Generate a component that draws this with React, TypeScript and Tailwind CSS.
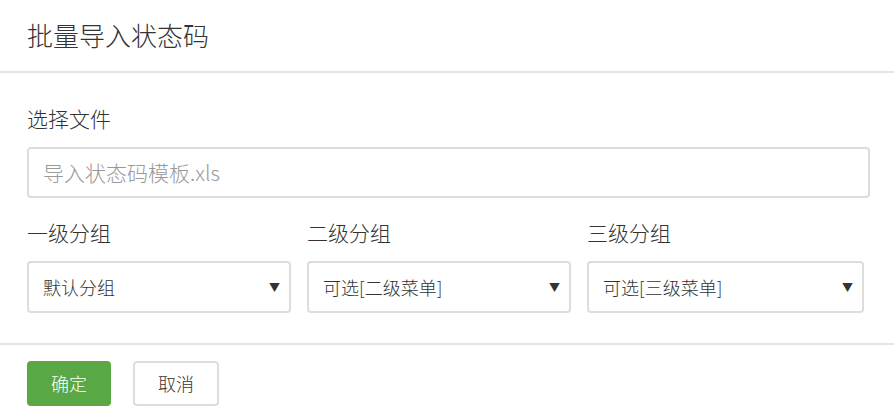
const groups = [
  { label: '一级分组', value: '默认分组', width: 'w-[264px]' },
  { label: '二级分组', value: '可选[二级菜单]', width: 'w-[264px]' },
  { label: '三级分组', value: '可选[三级菜单]', width: 'w-[277px]' },
];

export default function App() {
  return (
    <div
      className="w-[894px] h-[418px] bg-white text-[#333] overflow-hidden font-light"
      style={{ fontFamily: '"Noto Sans CJK SC", "Noto Sans", sans-serif' }}
    >
      {/* Header */}
      <div className="h-[73px] border-b-2 border-[#e5e5e5] flex items-center px-[27px] pb-[2px]">
        <h2 className="text-[26px] leading-none">批量导入状态码</h2>
      </div>

      {/* Body */}
      <div className="px-[27px] pt-[35px] h-[272px] border-b-2 border-[#e5e5e5]">
        <div className="text-[21px] leading-none">选择文件</div>
        <div className="mt-[18px] w-[843px] h-[51px] border-2 border-[#ddd] rounded-[4px] flex items-center px-[14px]">
          <span className="text-[21px] text-[#999] leading-none">导入状态码模板.xls</span>
        </div>

        <div className="mt-[24px] flex gap-[16px]">
          {groups.map((g) => (
            <div key={g.label} className={g.width}>
              <div className="text-[21px] leading-none">{g.label}</div>
              <div className="mt-[18px] h-[52px] border-2 border-[#ddd] rounded-[4px] flex items-center justify-between pl-[14px] pr-[9px]">
                <span className="text-[18px] leading-none">{g.value}</span>
                <span className="text-[11px] text-[#333] leading-none">▼</span>
              </div>
            </div>
          ))}
        </div>
      </div>

      {/* Footer */}
      <div className="px-[27px] pt-[16px] flex gap-[22px]">
        <button className="w-[84px] h-[45px] rounded-[4px] bg-[#5aa845] text-white text-[18px]">确定</button>
        <button className="w-[86px] h-[45px] rounded-[4px] border-2 border-[#ddd] bg-white text-[#333] text-[18px]">取消</button>
      </div>
    </div>
  );
}
